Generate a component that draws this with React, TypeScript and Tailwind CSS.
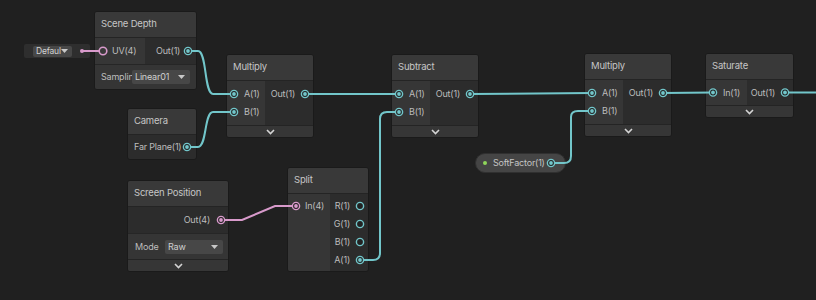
import React from "react";

const TEAL = "#72c6ca";
const PINK = "#d89acb";

function Chevron() {
  return (
    <svg width="9" height="6" viewBox="0 0 9 6">
      <path d="M1 1 L4.5 4.5 L8 1" fill="none" stroke="#d4d4d4" strokeWidth="1.6" />
    </svg>
  );
}

function Caret() {
  return (
    <svg width="7" height="4" viewBox="0 0 7 4">
      <path d="M0 0 H7 L3.5 4 Z" fill="#c8c8c8" />
    </svg>
  );
}

function Footer() {
  return (
    <div className="flex h-[12px] shrink-0 items-center justify-center border-t border-[#242424] bg-[#363636]">
      <Chevron />
    </div>
  );
}

type NodeProps = { className: string; title: string; children: React.ReactNode };

const Node = ({ className, title, children }: NodeProps) => (
  <div
    className={`absolute flex flex-col overflow-hidden rounded-[3px] border border-[#1a1a1a] bg-[#2c2c2c] ${className}`}
  >
    <div className="flex h-[26px] shrink-0 items-center border-b border-[#242424] bg-[#393939] px-[6px] text-[9.5px] text-[#c6c6c6]">
      {title}
    </div>
    {children}
  </div>
);

const Label = ({ children }: { children: React.ReactNode }) => (
  <div className="h-[18px] leading-[18px]">{children}</div>
);

const Dropdown = ({ text, className }: { text: string; className: string }) => (
  <div
    className={`flex h-[14px] items-center justify-between rounded-[2px] bg-[#474747] pl-[3px] pr-[5px] text-[9px] text-[#cfcfcf] ${className}`}
  >
    <span>{text}</span>
    <Caret />
  </div>
);

const BinaryNode = ({ className, title }: { className: string; title: string }) => (
  <Node className={className} title={title}>
    <div className="flex h-[44px] text-[9px] text-[#bdbdbd]">
      <div className="flex w-[38px] flex-col bg-[#363636] pl-[17px] pt-[4px]">
        <Label>A(1)</Label>
        <Label>B(1)</Label>
      </div>
      <div className="flex flex-1 flex-col items-end pr-[18px] pt-[4px]">
        <Label>Out(1)</Label>
      </div>
    </div>
    <Footer />
  </Node>
);

function Port({ x, y, color, filled = true }: { x: number; y: number; color: string; filled?: boolean }) {
  return (
    <g>
      <circle cx={x} cy={y} r={3.6} fill="#222222" stroke={color} strokeWidth={1.4} />
      {filled && <circle cx={x} cy={y} r={1.9} fill={color} />}
    </g>
  );
}

function Wires() {
  return (
    <svg className="pointer-events-none absolute inset-0" width="816" height="300">
      <g fill="none" strokeWidth="2" strokeLinecap="round">
        <path d="M188 51 H198 C207 51 204 94 213 94 H234" stroke={TEAL} />
        <path d="M187 147 H198 C207 147 204 112 213 112 H234" stroke={TEAL} />
        <path d="M305 94 H399" stroke={TEAL} />
        <path d="M360 260 H373 Q380 260 380 253 V119 Q380 112 387 112 H399" stroke={TEAL} />
        <path d="M470 94 L592 93" stroke={TEAL} />
        <path d="M551 163 H564 Q571 163 571 156 V117 Q571 111 578 111 H592" stroke={TEAL} />
        <path d="M663 93 L713 92.5" stroke={TEAL} />
        <path d="M785 92.5 H816" stroke={TEAL} />
        <path d="M221 220 H242 L275 206 H296" stroke={PINK} />
        <path d="M82 51 H100" stroke={PINK} />
      </g>
      <circle cx={82} cy={51} r={2} fill={PINK} />
      <circle cx={103} cy={51} r={3.8} fill="#393939" stroke={PINK} strokeWidth={1.6} />
      <Port x={188} y={51} color={TEAL} />
      <Port x={187} y={147} color={TEAL} />
      <Port x={234} y={94} color={TEAL} />
      <Port x={234} y={112} color={TEAL} />
      <Port x={305} y={94} color={TEAL} />
      <Port x={399} y={94} color={TEAL} />
      <Port x={399} y={112} color={TEAL} />
      <Port x={470} y={94} color={TEAL} />
      <Port x={592} y={93} color={TEAL} />
      <Port x={592} y={111} color={TEAL} />
      <Port x={663} y={93} color={TEAL} />
      <Port x={713} y={92.5} color={TEAL} />
      <Port x={785} y={92.5} color={TEAL} />
      <Port x={551} y={163} color={TEAL} />
      <Port x={221} y={220} color={PINK} />
      <Port x={296} y={206} color={PINK} />
      <Port x={360} y={206} color={TEAL} filled={false} />
      <Port x={360} y={224} color={TEAL} filled={false} />
      <Port x={360} y={242} color={TEAL} filled={false} />
      <Port x={360} y={260} color={TEAL} />
    </svg>
  );
}

export default function App() {
  return (
    <div className="relative h-[300px] w-[816px] overflow-hidden bg-[#202020] font-['Inter',sans-serif] tracking-[-0.2px]">
      {/* inline default value for UV */}
      <div className="absolute left-[24px] top-[44px] flex h-[14px] w-[66px] items-center rounded-[2px] bg-[#2e2e2e] pl-[9px]">
        <div className="flex h-[11px] w-[39px] items-center justify-between rounded-[2px] bg-[#474747] pl-[3px] pr-[4px] text-[8.5px] text-[#d2d2d2]">
          <span>Defaul</span>
          <Caret />
        </div>
      </div>

      <Node className="left-[94px] top-[11px] w-[103px]" title="Scene Depth">
        <div className="flex h-[26px] text-[9px] text-[#bdbdbd]">
          <div className="flex w-[50px] items-center bg-[#363636] pl-[17px]">UV(4)</div>
          <div className="flex flex-1 items-center pl-[11px]">Out(1)</div>
        </div>
        <div className="flex h-[25px] items-center border-t border-[#262626] bg-[#353535] pl-[6px] text-[9px] text-[#bdbdbd]">
          <span className="w-[31px] whitespace-nowrap">Samplin</span>
          <Dropdown text="Linear01" className="w-[58px]" />
        </div>
      </Node>

      <Node className="left-[127px] top-[108px] w-[70px]" title="Camera">
        <div className="flex h-[24px] items-center whitespace-nowrap pl-[6px] text-[9px] text-[#bdbdbd]">Far Plane(1)</div>
      </Node>

      <Node className="left-[127px] top-[180px] w-[102px]" title="Screen Position">
        <div className="flex h-[26px] items-center justify-end pr-[18px] text-[9px] text-[#bdbdbd]">Out(4)</div>
        <div className="flex h-[26px] items-center border-t border-[#262626] bg-[#353535] pl-[7px] text-[9px] text-[#bdbdbd]">
          <span className="w-[30px]">Mode</span>
          <Dropdown text="Raw" className="w-[58px]" />
        </div>
        <Footer />
      </Node>

      <Node className="left-[287px] top-[167px] w-[82px]" title="Split">
        <div className="flex h-[77px] text-[9px] text-[#bdbdbd]">
          <div className="flex w-[42px] flex-col bg-[#363636] pl-[17px] pt-[3px]">
            <Label>In(4)</Label>
          </div>
          <div className="flex flex-1 flex-col items-end pr-[18px] pt-[3px]">
            <Label>R(1)</Label>
            <Label>G(1)</Label>
            <Label>B(1)</Label>
            <Label>A(1)</Label>
          </div>
        </div>
      </Node>

      <BinaryNode className="left-[226px] top-[54px] w-[88px]" title="Multiply" />
      <BinaryNode className="left-[391px] top-[54px] w-[88px]" title="Subtract" />
      <BinaryNode className="left-[584px] top-[53px] w-[88px]" title="Multiply" />

      <Node className="left-[705px] top-[53px] w-[89px]" title="Saturate">
        <div className="flex h-[25px] text-[9px] text-[#bdbdbd]">
          <div className="flex w-[41px] items-center bg-[#363636] pl-[17px]">In(1)</div>
          <div className="flex flex-1 items-center justify-end pr-[18px]">Out(1)</div>
        </div>
        <Footer />
      </Node>

      <div className="absolute left-[475px] top-[153px] flex h-[20px] w-[91px] items-center whitespace-nowrap rounded-full border border-[#303030] bg-[#454545] pl-[7px] text-[9px] text-[#c4c4c4]">
        <span className="mr-[6px] h-[4px] w-[4px] shrink-0 rounded-full bg-[#8fd65a]" />
        SoftFactor(1)
      </div>

      <Wires />
    </div>
  );
}
